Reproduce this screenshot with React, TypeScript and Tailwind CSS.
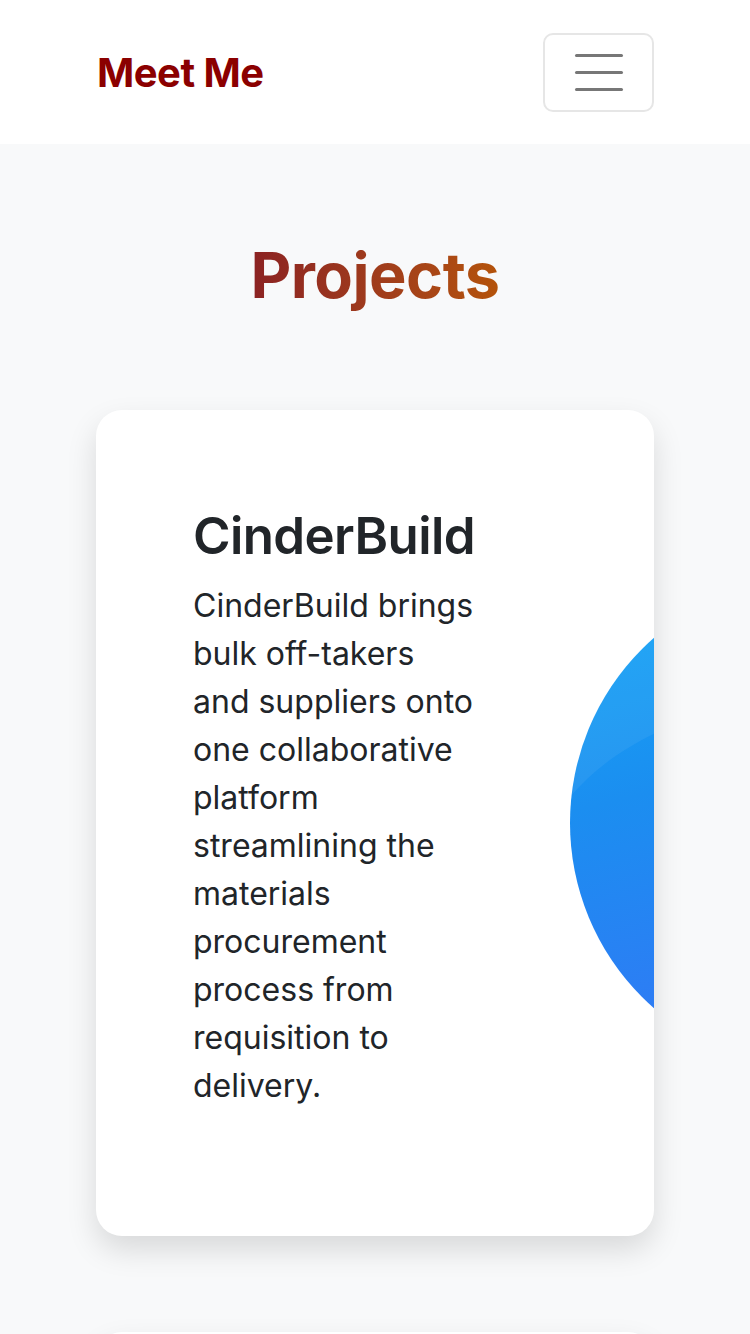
import React from 'react';

const Header = () => {
  return (
    <header className="bg-white h-[144px] flex items-center justify-between pl-[97px] pr-[96px]">
      <a className="text-[40px] font-bold text-[#8b0000] tracking-[-0.5px] mt-[2px]">Meet Me</a>
      <button className="w-[111px] h-[79px] border-2 border-[#e6e6e6] rounded-[10px] flex flex-col items-center justify-center gap-[14px]">
        <span className="block w-[48px] h-[3px] rounded-full bg-[#777777]" />
        <span className="block w-[48px] h-[3px] rounded-full bg-[#777777]" />
        <span className="block w-[48px] h-[3px] rounded-full bg-[#777777]" />
      </button>
    </header>
  );
};

const ProjectCard = ({ title, text }: { title: string; text: string }) => {
  return (
    <div className="bg-white rounded-[26px] shadow-[0_14px_30px_rgba(0,0,0,0.13)] overflow-hidden flex items-center h-[826px] pl-[97px]">
      <div className="w-[283px] shrink-0 text-[#212529] mt-[-30px]">
        <h3 className="text-[51px] font-semibold leading-[60px] mb-[16px] tracking-[-0.6px] whitespace-nowrap">{title}</h3>
        <p className="text-[32px] leading-[48px]">{text}</p>
      </div>
      <div className="shrink-0 ml-[94px]">
        <svg width="492" height="492" viewBox="0 0 492 492">
          <defs>
            <linearGradient id="blue" x1="0" y1="0" x2="0.25" y2="1">
              <stop offset="0" stopColor="#13a9f7" />
              <stop offset="0.45" stopColor="#1b8ef0" />
              <stop offset="1" stopColor="#3377f6" />
            </linearGradient>
          </defs>
          <circle cx="246" cy="246" r="246" fill="url(#blue)" />
          <path d="M0 220 C 60 150, 160 110, 492 60 L 492 0 L 0 0 Z" fill="#ffffff" opacity="0.06" />
        </svg>
      </div>
    </div>
  );
};

const App = () => {
  return (
    <div className="min-h-screen bg-[#f8f9fa]" style={{ fontFamily: 'Inter, "Noto Sans", sans-serif' }}>
      <Header />
      <section className="px-[96px] pt-[94px]">
        <h2 className="text-center text-[63px] font-bold leading-[1.2] tracking-[-0.5px] bg-gradient-to-r from-[#8b2222] to-[#b45309] bg-clip-text text-transparent w-fit mx-auto">
          Projects
        </h2>
        <div className="mt-[96px] flex flex-col gap-[96px] pb-[96px]">
          <ProjectCard
            title="CinderBuild"
            text="CinderBuild brings bulk off-takers and suppliers onto one collaborative platform streamlining the materials procurement process from requisition to delivery."
          />
          <ProjectCard title="Meet Me" text="A simple profile and portfolio page." />
        </div>
      </section>
    </div>
  );
};

export default App;
